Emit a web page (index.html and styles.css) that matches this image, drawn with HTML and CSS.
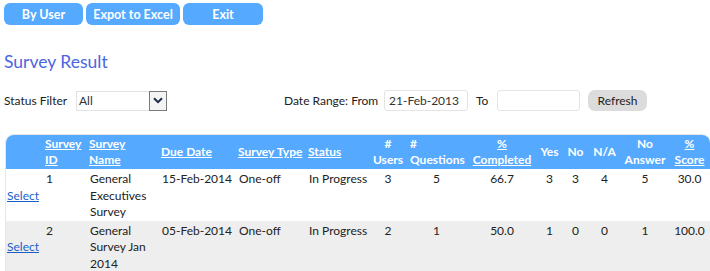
FILE: index.html
```html
<!DOCTYPE html>
<html>
<head>
<meta charset="utf-8">
<link rel="stylesheet" href="styles.css">
</head>
<body>
<div class="toolbar">
  <button class="btn btn-user">By User</button>
  <button class="btn btn-excel">Expot to Excel</button>
  <button class="btn btn-exit">Exit</button>
</div>
<h1 class="title">Survey Result</h1>
<div class="filters">
  <span class="lbl status-lbl">Status Filter</span>
  <div class="select"><span class="select-val">All</span><span class="select-arrow"><svg width="10" height="7" viewBox="0 0 10 7"><path d="M1 1.2 L5 5.2 L9 1.2" fill="none" stroke="#1b2a4a" stroke-width="2"/></svg></span></div>
  <span class="lbl date-lbl">Date Range: From</span>
  <div class="input input-from">21-Feb-2013</div>
  <span class="lbl to-lbl">To</span>
  <div class="input input-to"></div>
  <button class="refresh">Refresh</button>
</div>
<table class="grid">
  <colgroup>
    <col class="c1"><col class="c2"><col class="c3"><col class="c4"><col class="c5"><col class="c6"><col class="c7"><col class="c8"><col class="c9"><col class="c10"><col class="c11"><col class="c12"><col class="c13"><col class="c14">
  </colgroup>
  <thead>
    <tr>
      <th class="first"></th>
      <th class="left"><a>Survey<br>ID</a></th>
      <th class="left"><a>Survey<br>Name</a></th>
      <th class="left"><a>Due Date</a></th>
      <th class="left"><a>Survey Type</a></th>
      <th class="left"><a>Status</a></th>
      <th>#<br>Users</th>
      <th class="qhead">#<br>Questions</th>
      <th><a>%<br>Completed</a></th>
      <th>Yes</th>
      <th>No</th>
      <th>N/A</th>
      <th>No<br>Answer</th>
      <th class="last"><a>%<br>Score</a></th>
    </tr>
  </thead>
  <tbody>
    <tr>
      <td class="sel"><a>Select</a></td>
      <td class="id">1</td>
      <td>General Executives Survey</td>
      <td>15-Feb-2014</td>
      <td>One-off</td>
      <td>In Progress</td>
      <td class="num">3</td>
      <td class="num">5</td>
      <td class="num">66.7</td>
      <td class="num">3</td>
      <td class="num">3</td>
      <td class="num">4</td>
      <td class="num">5</td>
      <td class="num">30.0</td>
    </tr>
    <tr class="alt">
      <td class="sel"><a>Select</a></td>
      <td class="id">2</td>
      <td>General Survey Jan 2014</td>
      <td>05-Feb-2014</td>
      <td>One-off</td>
      <td>In Progress</td>
      <td class="num">2</td>
      <td class="num">1</td>
      <td class="num">50.0</td>
      <td class="num">1</td>
      <td class="num">0</td>
      <td class="num">0</td>
      <td class="num">1</td>
      <td class="num">100.0</td>
    </tr>
  </tbody>
</table>
</body>
</html>
```
FILE: styles.css
```css
* { box-sizing: border-box; }
body {
  margin: 0;
  padding: 3px 1px 0 4px;
  font-family: Lato, "Open Sans", sans-serif;
  font-size: 12px;
  color: #222;
  background: #fff;
}
.toolbar {
  display: flex;
  gap: 3px;
  height: 22px;
}
.btn {
  height: 22px;
  border: none;
  border-radius: 6px;
  background: #55aaff;
  color: #fff;
  font-family: Lato, sans-serif;
  font-weight: bold;
  font-size: 12.5px;
  padding: 0;
}
.btn-user { width: 79px; }
.btn-excel { width: 94px; }
.btn-exit { width: 80px; }
.title {
  margin: 26px 0 0 0;
  font-weight: normal;
  font-size: 17.5px;
  line-height: 22px;
  color: #4a66e0;
  height: 22px;
}
.filters {
  display: flex;
  align-items: center;
  margin-top: 17px;
  height: 21px;
}
.lbl { white-space: nowrap; }
.status-lbl { width: 72px; }
.select {
  width: 91px;
  height: 20px;
  border: 1px solid #e2e2e2;
  display: flex;
  align-items: center;
  justify-content: space-between;
  background: #fff;
}
.select-val { padding-left: 2px; color: #333; }
.select-arrow {
  width: 18px;
  height: 20px;
  margin-right: -1px;
  border: 1px solid #7a7a7a;
  background: #f4f4f4;
  display: flex;
  align-items: center;
  justify-content: center;
}
.date-lbl { margin-left: 117px; width: 100px; }
.input {
  height: 21px;
  border: 1px solid #e4e4e4;
  border-radius: 3px;
  padding: 2px 0 0 4px;
  color: #333;
}
.input-from { width: 84px; }
.to-lbl { margin-left: 8px; width: 20px; }
.input-to { width: 83px; margin-left: 1px; }
.refresh {
  margin-left: 8px;
  width: 59px;
  height: 21px;
  border: none;
  border-radius: 7px;
  background: #dcdcdc;
  font-family: Lato, sans-serif;
  font-size: 12px;
  color: #222;
  padding: 0;
}
.grid {
  margin-top: 23px;
  margin-left: 1px;
  width: 704px;
  table-layout: fixed;
  border-collapse: separate;
  border-spacing: 0;
  border: 1px solid #e6e6e6;
  border-radius: 9px 9px 0 0;
}
.c1 { width: 37px; } .c2 { width: 44px; } .c3 { width: 72px; } .c4 { width: 77px; }
.c5 { width: 70px; } .c6 { width: 65px; } .c7 { width: 34px; } .c8 { width: 63px; }
.c9 { width: 68px; } .c10 { width: 27px; } .c11 { width: 25px; } .c12 { width: 33px; }
.c13 { width: 48px; } .c14 { width: 41px; }
.grid th {
  background: #55aaff;
  color: #fff;
  font-weight: bold;
  height: 34px;
  padding: 1px 1px;
  line-height: 16px;
  text-align: center;
  vertical-align: middle;
  white-space: nowrap;
}
.grid th.left { text-align: left; padding-left: 2px; }
.grid th.qhead { text-align: left; padding-left: 5px; }
.grid th.first { border-top-left-radius: 8px; }
.grid th.last { border-top-right-radius: 8px; }
.grid th a { text-decoration: underline; color: #fff; }
.grid td {
  vertical-align: top;
  padding: 2px 1px 0 3px;
  line-height: 16.5px;
  height: 51px;
}
.grid tr.alt td { background: #eeeeee; }
.grid td.sel { vertical-align: middle; padding-left: 1px; }
.grid td.sel a { color: #1a5fc9; text-decoration: underline; }
.grid td.id { padding-left: 3px; }
.grid td.num { text-align: center; padding-left: 1px; }
```
